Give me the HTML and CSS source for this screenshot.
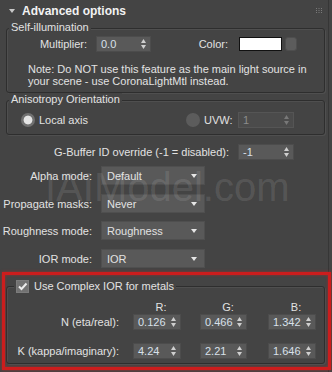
FILE: index.html
```html
<!DOCTYPE html>
<html lang="en">
<head>
    <meta charset="UTF-8">
    <meta name="viewport" content="width=device-width, initial-scale=1.0">
    <title>Advanced options</title>
    <link rel="stylesheet" href="styles.css">
</head>
<body>
    <div class="page">
        <div class="rollout">
            <div class="rollout-head">
                <svg class="caret" width="6" height="4" viewBox="0 0 6 4"><path d="M0 0H6L3 4Z"/></svg>
                <span class="rollout-title">Advanced options</span>
                <svg class="grip" width="6" height="5" viewBox="0 0 6 5">
                    <rect x="0" y="0" width="1" height="1"/><rect x="2.5" y="0" width="1" height="1"/><rect x="5" y="0" width="1" height="1"/>
                    <rect x="0" y="2" width="1" height="1"/><rect x="2.5" y="2" width="1" height="1"/><rect x="5" y="2" width="1" height="1"/>
                    <rect x="0" y="4" width="1" height="1"/><rect x="2.5" y="4" width="1" height="1"/><rect x="5" y="4" width="1" height="1"/>
                </svg>
            </div>

            <!-- Self-illumination -->
            <fieldset class="group group-self">
                <legend>Self-illumination</legend>
                <div class="row">
                    <span class="lbl lbl-mult">Multiplier:</span>
                    <div class="spinner spin-mult">
                        <span class="val">0.0</span>
                        <svg class="arrows" width="5" height="10" viewBox="0 0 5 10"><path d="M0 4L2.5 0L5 4ZM0 6H5L2.5 10Z"/></svg>
                    </div>
                    <span class="lbl lbl-color">Color:</span>
                    <div class="swatch"></div>
                    <div class="swatch-btn"></div>
                </div>
                <p class="note">Note: Do NOT use this feature as the main light source in<br>your scene - use CoronaLightMtl instead.</p>
            </fieldset>

            <!-- Anisotropy -->
            <fieldset class="group group-aniso">
                <legend>Anisotropy Orientation</legend>
                <div class="row row-radio">
                    <div class="opt opt-local">
                        <span class="radio checked"></span>
                        <span class="opt-text">Local axis</span>
                    </div>
                    <div class="opt">
                        <span class="radio"></span>
                        <span class="opt-text opt-uvw">UVW:</span>
                    </div>
                    <div class="spinner spin-wide disabled">
                        <span class="val">1</span>
                        <svg class="arrows" width="5" height="10" viewBox="0 0 5 10"><path d="M0 4L2.5 0L5 4ZM0 6H5L2.5 10Z"/></svg>
                    </div>
                </div>
            </fieldset>

            <div class="row row-gbuf">
                <span class="lbl lbl-gbuf">G-Buffer ID override (-1 = disabled):</span>
                <div class="spinner spin-wide">
                    <span class="val">-1</span>
                    <svg class="arrows" width="5" height="10" viewBox="0 0 5 10"><path d="M0 4L2.5 0L5 4ZM0 6H5L2.5 10Z"/></svg>
                </div>
            </div>

            <div class="row row-drop drop-alpha">
                <span class="lbl lbl-drop">Alpha mode:</span>
                <div class="dropdown"><span>Default</span><svg class="drop-arrow" width="6" height="4" viewBox="0 0 6 4"><path d="M0 0H6L3 4Z"/></svg></div>
            </div>
            <div class="row row-drop drop-masks">
                <span class="lbl lbl-drop">Propagate masks:</span>
                <div class="dropdown"><span>Never</span><svg class="drop-arrow" width="6" height="4" viewBox="0 0 6 4"><path d="M0 0H6L3 4Z"/></svg></div>
            </div>
            <div class="row row-drop drop-rough">
                <span class="lbl lbl-drop">Roughness mode:</span>
                <div class="dropdown"><span>Roughness</span><svg class="drop-arrow" width="6" height="4" viewBox="0 0 6 4"><path d="M0 0H6L3 4Z"/></svg></div>
            </div>
            <div class="row row-drop drop-ior">
                <span class="lbl lbl-drop">IOR mode:</span>
                <div class="dropdown"><span>IOR</span><svg class="drop-arrow" width="6" height="4" viewBox="0 0 6 4"><path d="M0 0H6L3 4Z"/></svg></div>
            </div>

            <!-- Complex IOR -->
            <fieldset class="group group-ior">
                <legend class="legend-check">
                    <span class="checkbox"><svg width="11" height="11" viewBox="0 0 11 11"><path d="M2 5.5L4.5 8L9.5 2.5" /></svg></span>
                    <span>Use Complex IOR for metals</span>
                </legend>
                <div class="ior-grid cols">
                    <span></span>
                    <span class="col-head">R:</span>
                    <span class="col-head">G:</span>
                    <span class="col-head">B:</span>
                </div>
                <div class="ior-grid row-n">
                    <span class="lbl lbl-ior">N (eta/real):</span>
                    <div class="spinner spin-rgb"><span class="val">0.126</span><svg class="arrows" width="5" height="10" viewBox="0 0 5 10"><path d="M0 4L2.5 0L5 4ZM0 6H5L2.5 10Z"/></svg></div>
                    <div class="spinner spin-rgb spin-g"><span class="val">0.466</span><svg class="arrows" width="5" height="10" viewBox="0 0 5 10"><path d="M0 4L2.5 0L5 4ZM0 6H5L2.5 10Z"/></svg></div>
                    <div class="spinner spin-rgb"><span class="val">1.342</span><svg class="arrows" width="5" height="10" viewBox="0 0 5 10"><path d="M0 4L2.5 0L5 4ZM0 6H5L2.5 10Z"/></svg></div>
                </div>
                <div class="ior-grid row-k">
                    <span class="lbl lbl-ior">K (kappa/imaginary):</span>
                    <div class="spinner spin-rgb"><span class="val">4.24</span><svg class="arrows" width="5" height="10" viewBox="0 0 5 10"><path d="M0 4L2.5 0L5 4ZM0 6H5L2.5 10Z"/></svg></div>
                    <div class="spinner spin-rgb spin-g"><span class="val">2.21</span><svg class="arrows" width="5" height="10" viewBox="0 0 5 10"><path d="M0 4L2.5 0L5 4ZM0 6H5L2.5 10Z"/></svg></div>
                    <div class="spinner spin-rgb"><span class="val">1.646</span><svg class="arrows" width="5" height="10" viewBox="0 0 5 10"><path d="M0 4L2.5 0L5 4ZM0 6H5L2.5 10Z"/></svg></div>
                </div>
            </fieldset>
        </div>

        <div class="watermark">IAIModel.com</div>
        <div class="highlight"></div>
    </div>
</body>
</html>
```

FILE: styles.css
```css
body {
    margin: 0;
    background-color: #444;
    font-family: "Liberation Sans", Arial, sans-serif;
    font-size: 11px;
    color: #e2e2e2;
}

.page {
    position: relative;
    width: 332px;
    height: 372px;
    overflow: hidden;
}

.rollout {
    width: 329px;
    height: 372px;
    box-sizing: border-box;
    border-right: 1px solid #363636;
}

/* rollout header */
.rollout-head {
    display: flex;
    align-items: center;
    height: 21px;
    padding-left: 9px;
}

.caret {
    fill: #c8c8c8;
    margin-right: 7px;
}

.rollout-title {
    font-weight: bold;
    font-size: 12px;
    color: #f2f2f2;
}

.grip {
    fill: #7a7a7a;
    margin-left: auto;
    margin-right: 6px;
}

/* group boxes */
.group {
    margin: 0 3px 0 6px;
    padding: 0;
    min-width: 0;
    border: 1px solid #2e2e2e;
    border-radius: 3px;
    box-shadow: inset 1px 1px 0 #4f4f4f, 1px 1px 0 #4f4f4f;
}

.group legend {
    margin-left: 2px;
    padding: 0 2px 3px;
    line-height: 12px;
    background-color: #444;
}

.group-self {
    padding-bottom: 5px;
}

.group-aniso {
    padding-bottom: 6px;
}

.group-ior {
    margin-top: 12px;
    padding-bottom: 4px;
}

.row {
    display: flex;
    align-items: center;
    height: 16px;
}

.lbl {
    flex: none;
    text-align: right;
    white-space: nowrap;
}

.lbl-mult {
    width: 80px;
}

.lbl-color {
    width: 36px;
    margin-left: 41px;
}

/* spinners */
.spinner {
    flex: none;
    display: flex;
    align-items: center;
    justify-content: space-between;
    box-sizing: border-box;
    height: 16px;
    padding: 0 4px 0 4px;
    background-color: #595959;
    border: 1px solid #4c4c4c;
}

.spinner .val {
    color: #d8e0ea;
}

.arrows {
    fill: #cfcfcf;
}

.spin-mult {
    width: 55px;
    margin-left: 9px;
}

.spin-wide {
    width: 56px;
}

.spinner.disabled {
    background-color: #4b4b4b;
    border-color: #555;
}

.spinner.disabled .val {
    color: #8c8c8c;
}

.spinner.disabled .arrows {
    fill: #787878;
}

.swatch {
    flex: none;
    width: 43px;
    height: 14px;
    margin-left: 11px;
    box-sizing: border-box;
    background-color: #fff;
    border: 1px solid #111;
}

.swatch-btn {
    flex: none;
    width: 12px;
    height: 14px;
    margin-left: 3px;
    box-sizing: border-box;
    background-color: #5c5c5c;
    border: 1px solid #4e4e4e;
    border-radius: 3px;
}

.note {
    margin: 11px 0 0 21px;
    line-height: 12px;
    white-space: nowrap;
}

/* radios */
.row-radio {
    margin-top: 4px;
    padding-left: 14px;
}

.opt {
    display: flex;
    align-items: center;
}

.opt-local {
    width: 165px;
}

.radio {
    width: 14px;
    height: 14px;
    border-radius: 50%;
    background-color: #5c5c5c;
}

.radio.checked {
    background: radial-gradient(circle, #e4e4e4 0 4px, #707070 4.8px);
}

.opt-text {
    margin-left: 4px;
}

.opt-uvw {
    width: 34px;
}

/* g-buffer */
.row-gbuf {
    margin-top: 9px;
}

.lbl-gbuf {
    width: 229px;
    margin-right: 9px;
}

/* dropdowns */
.row-drop {
    height: 19px;
}

.drop-alpha { margin-top: 6px; }
.drop-masks { margin-top: 9px; }
.drop-rough { margin-top: 8px; }
.drop-ior { margin-top: 9px; }

.lbl-drop {
    width: 92px;
}

.dropdown {
    flex: none;
    display: flex;
    align-items: center;
    justify-content: space-between;
    box-sizing: border-box;
    width: 104px;
    height: 19px;
    margin-left: 9px;
    padding: 0 7px 0 5px;
    background-color: #595959;
    border: 1px solid #4f4f4f;
}

.drop-arrow {
    fill: #e6e6e6;
}

/* complex IOR */
.group .legend-check {
    display: flex;
    align-items: center;
    margin-left: 7px;
    padding-bottom: 0;
    height: 13px;
    line-height: 13px;
}

.checkbox {
    display: flex;
    align-items: center;
    justify-content: center;
    width: 13px;
    height: 13px;
    margin-right: 5px;
    box-sizing: border-box;
    background-color: #727272;
    border: 1px solid #7c7c7c;
}

.checkbox path {
    fill: none;
    stroke: #ececec;
    stroke-width: 2;
}

.ior-grid {
    display: grid;
    grid-template-columns: 126px 67px 68px 48px;
    align-items: center;
}

.cols {
    margin-top: 8px;
    line-height: 12px;
}

.col-head {
    width: 48px;
    padding-left: 8px;
    box-sizing: border-box;
    text-align: center;
}

.row-n {
    margin-top: 1px;
}

.row-k {
    margin-top: 13px;
}

.lbl-ior {
    padding-right: 14px;
}

.spin-rgb {
    width: 48px;
}

.spin-g {
    width: 47px;
}

/* overlays */
.watermark {
    position: absolute;
    left: 45px;
    top: 167px;
    font-size: 40px;
    line-height: 40px;
    color: rgba(255, 255, 255, 0.11);
    white-space: nowrap;
    pointer-events: none;
}

.highlight {
    position: absolute;
    left: 2px;
    top: 272px;
    width: 329px;
    height: 98px;
    box-sizing: border-box;
    border: 3px solid #cc1d1d;
    box-shadow: 0 0 3px rgba(220, 30, 30, 0.55), inset 0 0 3px rgba(220, 30, 30, 0.55);
    pointer-events: none;
}
```
